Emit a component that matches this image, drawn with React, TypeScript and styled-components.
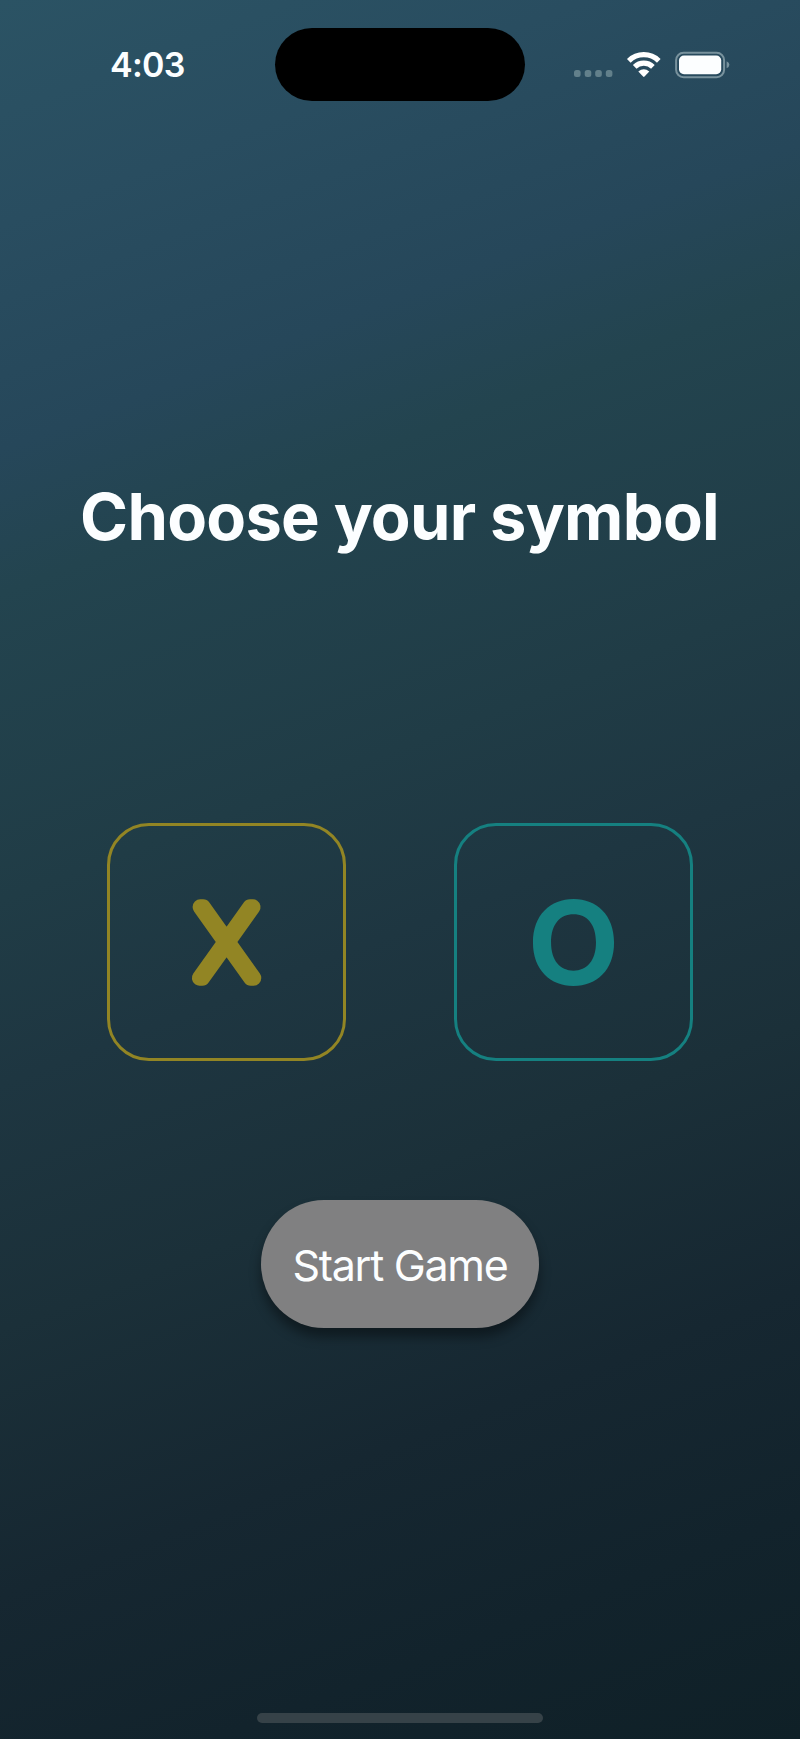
import React, { useState } from "react";
import styled, { createGlobalStyle } from "styled-components";

const GlobalStyle = createGlobalStyle`
  *, *::before, *::after { box-sizing: border-box; }
  body { margin: 0; background: #0f2027; }
`;

const Screen = styled.div`
  display: flex;
  flex-direction: column;
  align-items: center;
  width: 800px;
  height: 1739px;
  overflow: hidden;
  color: #fcfeff;
  font-family: Inter, "Liberation Sans", sans-serif;
  background: linear-gradient(
    159deg,
    #2b5364 0%,
    #294d60 11%,
    #26475a 22%,
    #23444f 29%,
    #203c46 44%,
    #1e3641 53%,
    #1b3039 65%,
    #162731 78%,
    #12232c 89%,
    #0f2027 100%
  );
`;

const StatusBar = styled.header`
  display: grid;
  grid-template-columns: 275px 250px 275px;
  align-items: center;
  width: 100%;
  height: 73px;
  margin-top: 28px;
`;

const Clock = styled.time`
  padding-left: 110px;
  font-size: 34px;
  line-height: 40px;
  font-weight: 600;
  letter-spacing: -0.7px;
`;

const Island = styled.div`
  height: 73px;
  border-radius: 37px / 36.5px;
  background: #000;
`;

const Indicators = styled.div`
  padding-left: 48px;
  height: 73px;
`;

const Title = styled.h1`
  margin: 377px 0 0;
  padding-right: 1px;
  font-size: 65px;
  line-height: 78px;
  font-weight: 700;
  letter-spacing: -0.75px;
  white-space: nowrap;
`;

const Choices = styled.div`
  display: flex;
  gap: 108px;
  margin-top: 267px;
`;

const Choice = styled.button<{ $tone: string }>`
  display: flex;
  align-items: center;
  justify-content: center;
  width: 239px;
  height: 238px;
  padding: 0;
  border: 3px solid ${(p) => p.$tone};
  border-radius: 42px;
  background: transparent;
  color: ${(p) => p.$tone};
  font-family: inherit;
`;

const Mark = styled.svg`
  display: block;
  width: 160px;
  height: 160px;
  overflow: visible;
  font-family: Inter, "Liberation Sans", sans-serif;
  fill: currentColor;
  text-anchor: middle;
`;

const StartButton = styled.button`
  width: 278px;
  height: 128px;
  margin-top: 139px;
  padding: 2px 0 0;
  border: 0;
  border-radius: 63px / 64px;
  background: #808081;
  box-shadow: 0 9px 12px rgba(0, 0, 0, 0.4);
  color: #fcfeff;
  font-family: inherit;
  font-size: 43px;
  font-weight: 400;
  letter-spacing: -1.3px;
  white-space: nowrap;
`;

const HomeIndicator = styled.div`
  width: 286px;
  height: 10px;
  margin-top: auto;
  margin-bottom: 16px;
  border-radius: 5px;
  background: #364248;
`;

function StatusIcons() {
  return (
    <svg width="180" height="73" viewBox="573 28 180 73" fill="none">
      <g fill="#62808b">
        <rect x="574" y="70" width="6.6" height="7" rx="2.5" />
        <rect x="584.7" y="70" width="6.6" height="7" rx="2.5" />
        <rect x="595.2" y="70" width="6.6" height="7" rx="2.5" />
        <rect x="605.8" y="70" width="6.6" height="7" rx="2.5" />
      </g>
      <g stroke="#fff" strokeWidth="5.2">
        <path d="M628.8 60.8a21.5 21.5 0 0 1 30 0" />
        <path d="M634.7 66.8a13 13 0 0 1 18.2 0" />
      </g>
      <path d="M638.3 71.6q5.5-4.6 11 0l-4.8 5q-.7.7-1.4 0Z" fill="#fff" />
      <rect x="676.1" y="52.8" width="48" height="24.4" rx="7.5" stroke="#78929d" strokeWidth="2" />
      <rect x="679" y="55.6" width="42.2" height="18.6" rx="5" fill="#fcfeff" />
      <path d="M726.6 61.2q2.8 1.2 2.8 3.5t-2.8 3.5Z" fill="#78929d" />
    </svg>
  );
}

export default function App() {
  const [, setSymbol] = useState<"X" | "O" | null>(null);
  return (
    <>
      <GlobalStyle />
      <Screen>
        <StatusBar>
          <Clock>4:03</Clock>
          <Island />
          <Indicators>
            <StatusIcons />
          </Indicators>
        </StatusBar>
        <Title>Choose your symbol</Title>
        <Choices>
          <Choice $tone="#928524" onClick={() => setSymbol("X")}>
            <Mark viewBox="0 0 160 160">
              <text
                x="79.5"
                y="115.5"
                fontSize="97"
                fontWeight="100"
                stroke="currentColor"
                strokeWidth="15.5"
                strokeLinejoin="round"
              >
                X
              </text>
            </Mark>
          </Choice>
          <Choice $tone="#158080" onClick={() => setSymbol("O")}>
            <Mark viewBox="0 0 160 160">
              <text x="77.2" y="122.8" fontSize="116" fontWeight="700" transform="scale(1.03 1)">
                O
              </text>
            </Mark>
          </Choice>
        </Choices>
        <StartButton>Start Game</StartButton>
        <HomeIndicator />
      </Screen>
    </>
  );
}
